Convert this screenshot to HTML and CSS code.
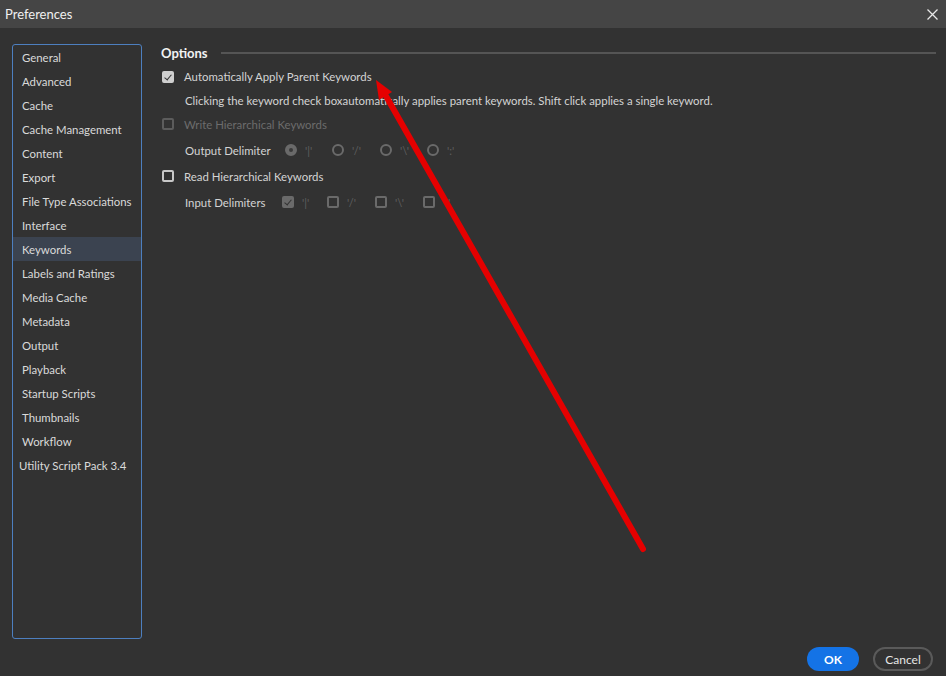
FILE: index.html
```html
<!DOCTYPE html>
<html lang="en">
<head>
    <meta charset="UTF-8">
    <title>Preferences</title>
    <link rel="stylesheet" href="styles.css">
</head>
<body>
    <div class="titlebar">
        <span class="title">Preferences</span>
        <svg class="close" width="11" height="11" viewBox="0 0 11 11">
            <path d="M0.5 0.5 L10.5 10.5 M10.5 0.5 L0.5 10.5" stroke="#e8e8e8" stroke-width="1.3"/>
        </svg>
    </div>

    <div class="main">
        <div class="sidebar">
            <div class="item">General</div>
            <div class="item">Advanced</div>
            <div class="item">Cache</div>
            <div class="item">Cache Management</div>
            <div class="item">Content</div>
            <div class="item">Export</div>
            <div class="item">File Type Associations</div>
            <div class="item">Interface</div>
            <div class="item selected">Keywords</div>
            <div class="item">Labels and Ratings</div>
            <div class="item">Media Cache</div>
            <div class="item">Metadata</div>
            <div class="item">Output</div>
            <div class="item">Playback</div>
            <div class="item">Startup Scripts</div>
            <div class="item">Thumbnails</div>
            <div class="item">Workflow</div>
            <div class="item plugin">Utility Script Pack 3.4</div>
        </div>

        <div class="content">
            <div class="section-head">
                <span>Options</span>
                <div class="rule"></div>
            </div>

            <div class="row first">
                <span class="check on"></span>
                <span class="label">Automatically Apply Parent Keywords</span>
            </div>
            <div class="row desc">
                Clicking the keyword check boxautomatically applies parent keywords. Shift click applies a single keyword.
            </div>
            <div class="row">
                <span class="check off"></span>
                <span class="label dim">Write Hierarchical Keywords</span>
            </div>
            <div class="row sub">
                <span class="sub-label out">Output Delimiter</span>
                <div class="choices">
                    <span class="choice"><span class="radio on"></span><span class="glyph">'|'</span></span>
                    <span class="choice w48"><span class="radio"></span><span class="glyph">'/'</span></span>
                    <span class="choice"><span class="radio"></span><span class="glyph">'\'</span></span>
                    <span class="choice"><span class="radio"></span><span class="glyph">':'</span></span>
                </div>
            </div>
            <div class="row">
                <span class="check"></span>
                <span class="label">Read Hierarchical Keywords</span>
            </div>
            <div class="row sub">
                <span class="sub-label in">Input Delimiters</span>
                <div class="choices">
                    <span class="choice w45"><span class="check dis on"></span><span class="glyph">'|'</span></span>
                    <span class="choice w48"><span class="check dis"></span><span class="glyph">'/'</span></span>
                    <span class="choice w48"><span class="check dis"></span><span class="glyph">'\'</span></span>
                    <span class="choice"><span class="check dis"></span><span class="glyph">':'</span></span>
                </div>
            </div>
        </div>
    </div>

    <div class="footer">
        <button class="ok">OK</button>
        <button class="cancel">Cancel</button>
    </div>

    <!-- annotation arrow drawn over the dialog -->
    <svg class="arrow" width="946" height="676" viewBox="0 0 946 676">
        <line x1="643" y1="549" x2="386" y2="96" stroke="#e50000" stroke-width="6" stroke-linecap="round"/>
        <polygon points="376,80 392,92 379,100" fill="#e50000"/>
    </svg>
</body>
</html>
```

FILE: styles.css
```css
html, body {
    margin: 0;
    padding: 0;
    background-color: #323232;
    color: #d4d4d4;
    font-family: Lato, "Open Sans", sans-serif;
    font-size: 11.4px;
}

body {
    width: 946px;
    height: 676px;
    display: flex;
    flex-direction: column;
    position: relative;
    overflow: hidden;
}

.titlebar {
    height: 28px;
    background-color: #454545;
    display: flex;
    align-items: center;
    justify-content: space-between;
    padding: 0 8px 0 5px;
    box-sizing: border-box;
}

.title {
    color: #f0f0f0;
    font-size: 13px;
}

.main {
    display: flex;
    padding: 16px 0 0 12px;
}

.sidebar {
    width: 130px;
    height: 595px;
    box-sizing: border-box;
    border: 1px solid #4d7fbf;
    border-radius: 3px;
    padding-top: 0;
}

.item {
    height: 24px;
    line-height: 25px;
    padding-left: 9px;
    color: #dadada;
}

.item.selected {
    background-color: #3b4350;
}

.item.plugin {
    padding-left: 6px;
}

.content {
    margin-left: 19px;
    flex: 1;
    padding-right: 10px;
}

.section-head {
    height: 18px;
    display: flex;
    align-items: center;
    gap: 13px;
    margin-bottom: 2px;
    color: #f2f2f2;
    font-weight: bold;
    font-size: 13px;
}

.section-head .rule {
    flex: 1;
    height: 2px;
    background-color: #555555;
}

.row {
    height: 26px;
    display: flex;
    align-items: center;
    padding-left: 1px;
}

.row.first {
    height: 25px;
}

.row.desc {
    height: 22px;
    padding-left: 24px;
}

.row.sub {
    padding-left: 24px;
}

.label {
    margin-left: 10px;
}

.dim {
    color: #6c6c6c;
}

.check {
    width: 12px;
    height: 12px;
    box-sizing: border-box;
    border: 2px solid #c8c8c8;
    border-radius: 2px;
    position: relative;
}

.check.on {
    background-color: #cfcfcf;
    border-color: #cfcfcf;
}

.check.on::after {
    content: "";
    position: absolute;
    left: 2px;
    top: 0px;
    width: 3px;
    height: 6px;
    border: solid #333333;
    border-width: 0 1.5px 1.5px 0;
    transform: rotate(40deg);
}

.check.off {
    border-color: #5c5c5c;
}

.check.dis {
    border-color: #6a6a6a;
}

.check.dis.on {
    background-color: #6a6a6a;
}

.sub-label.out {
    width: 100px;
}

.sub-label.in {
    width: 97px;
}

.choices {
    display: flex;
}

.choice {
    width: 47px;
    display: flex;
    align-items: center;
}

.choice.w48 {
    width: 48px;
}

.choice.w45 {
    width: 45px;
}

.radio {
    width: 12px;
    height: 12px;
    box-sizing: border-box;
    border: 2px solid #6a6a6a;
    border-radius: 50%;
    position: relative;
}

.radio.on {
    background-color: #6a6a6a;
}

.radio.on::after {
    content: "";
    position: absolute;
    left: 2px;
    top: 2px;
    width: 4px;
    height: 4px;
    border-radius: 50%;
    background-color: #3a3a3a;
}

.glyph {
    margin-left: 8px;
    color: #5f5f5f;
    font-size: 11px;
}

.footer {
    display: flex;
    justify-content: flex-end;
    gap: 14px;
    padding: 8px 13px 0 0;
}

button {
    height: 24px;
    border-radius: 12px;
    font-family: Lato, "Open Sans", sans-serif;
    font-size: 12px;
    font-weight: bold;
    cursor: pointer;
}

button.ok {
    width: 52px;
    background-color: #1473e6;
    color: #ffffff;
    border: none;
}

button.cancel {
    width: 60px;
    background-color: transparent;
    color: #e6e6e6;
    border: 2px solid #5a5a5a;
    font-weight: normal;
}

.arrow {
    position: absolute;
    left: 0;
    top: 0;
    pointer-events: none;
}
```
